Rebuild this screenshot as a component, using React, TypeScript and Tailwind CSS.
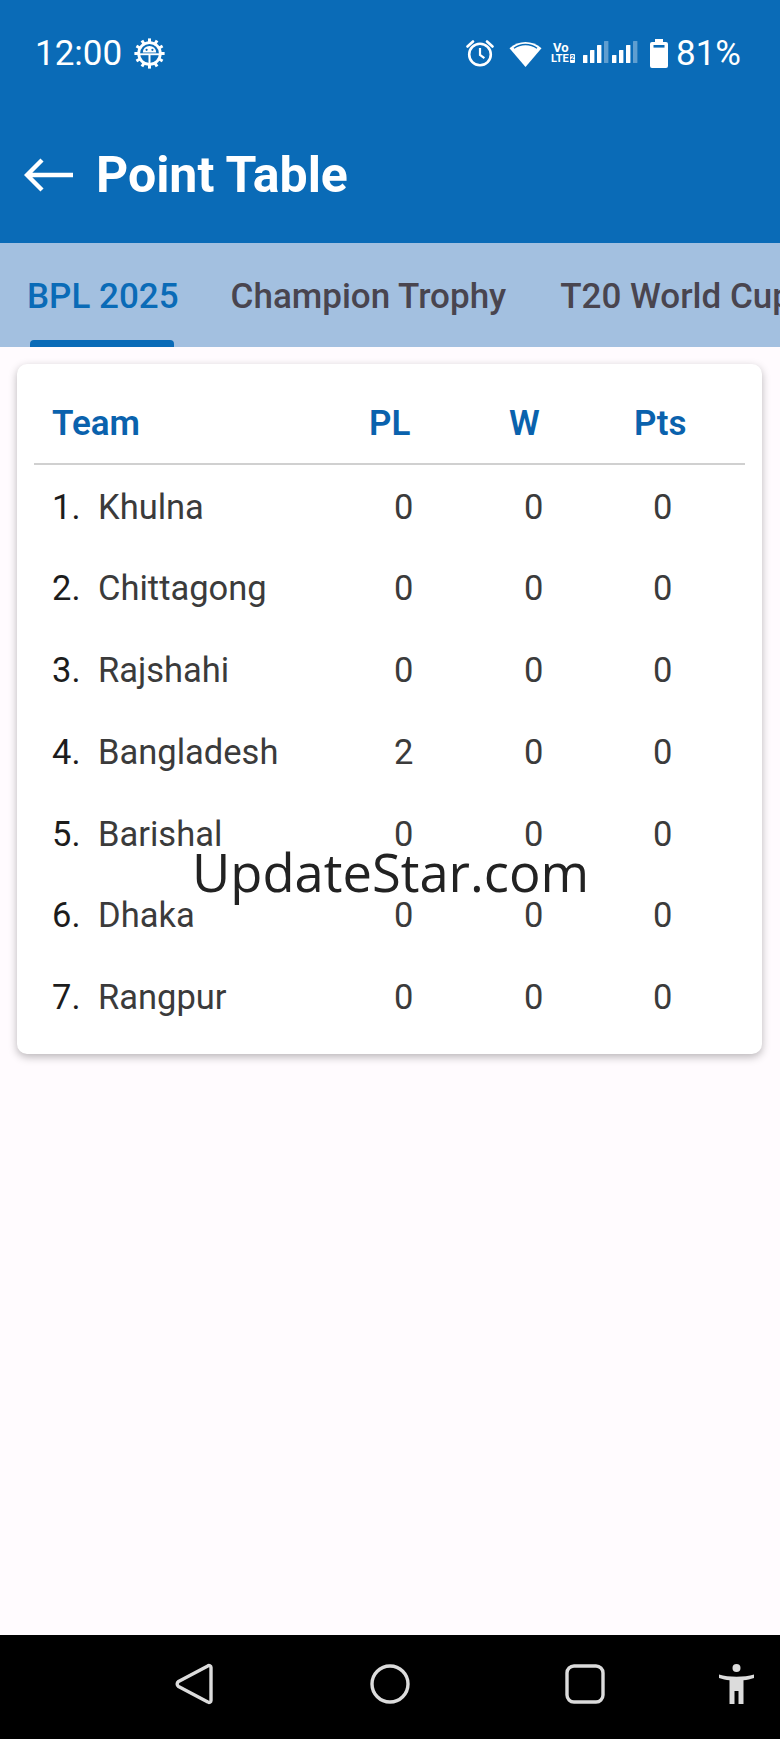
const rows: [string, string, string, string, string][] = [
  ["1.", "Khulna", "0", "0", "0"],
  ["2.", "Chittagong", "0", "0", "0"],
  ["3.", "Rajshahi", "0", "0", "0"],
  ["4.", "Bangladesh", "2", "0", "0"],
  ["5.", "Barishal", "0", "0", "0"],
  ["6.", "Dhaka", "0", "0", "0"],
  ["7.", "Rangpur", "0", "0", "0"],
];

function Gear() {
  const teeth = Array.from({ length: 12 }, (_, i) => i * 30);
  return (
    <svg width="31" height="31" viewBox="0 0 31 31" className="ml-[12px]">
      {teeth.map((a) => (
        <rect key={a} x="14" y="0.4" width="3" height="4.5" fill="#fff" transform={`rotate(${a} 15.5 15.5)`} />
      ))}
      <circle cx="15.5" cy="15.5" r="10.8" fill="none" stroke="#fff" strokeWidth="2.8" />
      <path d="M8.8 14.6a6.7 6.7 0 0 1 13.4 0z" fill="#fff" />
      <rect x="14.5" y="16" width="2" height="9" fill="#fff" />
      <rect x="5.5" y="15.3" width="20" height="1.9" fill="#fff" />
      <circle cx="12.6" cy="11.8" r="1.1" fill="#0a6bb7" />
      <circle cx="18.4" cy="11.8" r="1.1" fill="#0a6bb7" />
    </svg>
  );
}

function Alarm() {
  return (
    <svg width="28" height="28" viewBox="0 0 28 28" fill="none" stroke="#fff" strokeWidth="2.6">
      <circle cx="14" cy="15.5" r="10.8" />
      <path d="M14 9v7l4.4 3.2" strokeWidth="2.2" />
      <path d="M1.5 7.5 7 2.5M26.5 7.5 21 2.5" strokeLinecap="round" />
    </svg>
  );
}

function Wifi() {
  return (
    <svg width="33" height="27" viewBox="0 0 33 27" className="ml-[15px]">
      <path d="M0.5 8.2C9.5 0 23.5 0 32.5 8.2L16.5 27z" fill="#fff" />
      <path d="M5 8.2C11.5 3.2 21.5 3.2 28 8.2" fill="none" stroke="#0a6bb7" strokeWidth="1.4" />
    </svg>
  );
}

function Signal() {
  const bar = (x: number, h: number, dim?: boolean) => (
    <rect key={x} x={x} y={22 - h} width="4.4" height={h} fill="#fff" opacity={dim ? 0.35 : 1} rx="0.6" />
  );
  return (
    <svg width="56" height="24" viewBox="0 0 56 24" className="ml-[8px]">
      {bar(0, 8)}
      {bar(7, 13)}
      {bar(14, 18)}
      {bar(21, 22, true)}
      {bar(29, 8)}
      {bar(36, 13)}
      {bar(43, 18)}
      {bar(50, 22, true)}
    </svg>
  );
}

function Battery() {
  return (
    <svg width="18" height="29" viewBox="0 0 18 29" className="ml-[11px]">
      <path d="M5 0h8v3h3a2 2 0 0 1 2 2v22a2 2 0 0 1-2 2H2a2 2 0 0 1-2-2V5a2 2 0 0 1 2-2h3z" fill="#fff" />
      <rect x="3.5" y="6" width="11" height="2.6" fill="#0a6bb7" />
    </svg>
  );
}

export default function App() {
  return (
    <div className="relative flex h-[1739px] w-[780px] flex-col overflow-hidden bg-[#fffbfe] font-['Roboto',sans-serif]">
      <header className="h-[243px] shrink-0 bg-[#0a6bb7] text-white">
        <div className="flex h-[106px] items-center pl-[35px] pr-[39px]">
          <span className="text-[35px] leading-none">12:00</span>
          <Gear />
          <div className="ml-auto flex items-center">
            <Alarm />
            <Wifi />
            <div className="ml-[9px] flex w-[24px] flex-col font-bold">
              <span className="pl-[2px] text-[13px] leading-[10px]">Vo</span>
              <span className="mt-[1px] flex items-center text-[11px] leading-[10px]">
                LTE
                <span className="ml-[1px] h-[9px] w-[7px] rounded-[1px] bg-white text-center text-[7px] leading-[9px] text-[#0a6bb7]">2</span>
              </span>
            </div>
            <Signal />
            <Battery />
            <span className="ml-[8px] text-[35px] leading-none">81%</span>
          </div>
        </div>
        <div className="flex h-[137px] items-center pl-[24px]">
          <svg width="49" height="34" viewBox="0 0 49 34" fill="none" stroke="#fff" strokeWidth="4.4">
            <path d="M49 17H3M18 2 3 17l15 15" />
          </svg>
          <h1 className="ml-[23px] text-[50px] font-bold leading-none">Point Table</h1>
        </div>
      </header>

      <nav className="relative flex h-[104px] shrink-0 items-center overflow-hidden whitespace-nowrap bg-[#a3c0e0] pt-[5px] pl-[27px] text-[35px] font-medium text-[#49454f]">
        <span className="text-[#0a6bb7]">BPL 2025</span>
        <span className="ml-[52px]">Champion Trophy</span>
        <span className="ml-[54px]">T20 World Cup</span>
        <div className="absolute bottom-0 left-[30px] h-[7px] w-[144px] rounded-t-[4px] bg-[#0a6bb7]" />
      </nav>

      <main className="flex-1 px-[17px] pt-[17px]">
        <section className="h-[690px] w-[745px] rounded-[10px] bg-white px-[17px] shadow-[0_3px_8px_rgba(0,0,0,0.28)]">
          <div className="flex h-[101px] items-center border-b-2 border-[#d0d0d0] pl-[18px] pt-[20px] text-[35px] font-semibold leading-none text-[#0a62ad]">
            <span className="w-[317px]">Team</span>
            <span className="w-[140px]">PL</span>
            <span className="w-[125px]">W</span>
            <span>Pts</span>
          </div>
          <div className="pl-[18px] pt-[1px]">
            {rows.map(([n, name, pl, w, pts]) => (
              <div key={n} className="flex h-[81.75px] items-center text-[34.5px] leading-none text-[#3b3b3b]">
                <span className="w-[46px] text-[#1c1c1c]">{n}</span>
                <span className="w-[296px]">{name}</span>
                <span className="w-[130px]">{pl}</span>
                <span className="w-[129px]">{w}</span>
                <span>{pts}</span>
              </div>
            ))}
          </div>
        </section>
      </main>

      <footer className="flex h-[104px] shrink-0 items-center bg-black pb-[7px] pl-[175px]">
        <svg width="39" height="42" viewBox="0 0 39 42" fill="none" stroke="#dcdcdc" strokeWidth="3.4" strokeLinejoin="round">
          <path d="M36 4.5a2 2 0 0 0-3.2-1.6L3.5 18.5a3 3 0 0 0 0 5L32.8 39a2 2 0 0 0 3.2-1.6z" />
        </svg>
        <svg width="40" height="40" viewBox="0 0 40 40" fill="none" stroke="#dcdcdc" strokeWidth="3.4" className="ml-[156px]">
          <circle cx="20" cy="20" r="18" />
        </svg>
        <svg width="40" height="40" viewBox="0 0 40 40" fill="none" stroke="#dcdcdc" strokeWidth="3.4" className="ml-[155px]">
          <rect x="2" y="2" width="36" height="36" rx="7" />
        </svg>
        <svg width="35" height="40" viewBox="0 0 35 40" fill="#dcdcdc" className="ml-[114px]">
          <circle cx="17.5" cy="4" r="4" />
          <path d="M0 10.5c5 1.8 11 2.2 17.5 2.2S30 12.3 35 10.5v3.5c-3.500 1.300-7 2-10.500 2.300V40h-5V27h-4v13h-5V16.300C7 16 3.500 15.300 0 14z" />
        </svg>
      </footer>

      <div className="absolute left-[192px] top-[837px] whitespace-nowrap font-['Open_Sans',sans-serif] text-[52.5px] leading-[70px] text-[#222]">
        UpdateStar.com
      </div>
    </div>
  );
}
